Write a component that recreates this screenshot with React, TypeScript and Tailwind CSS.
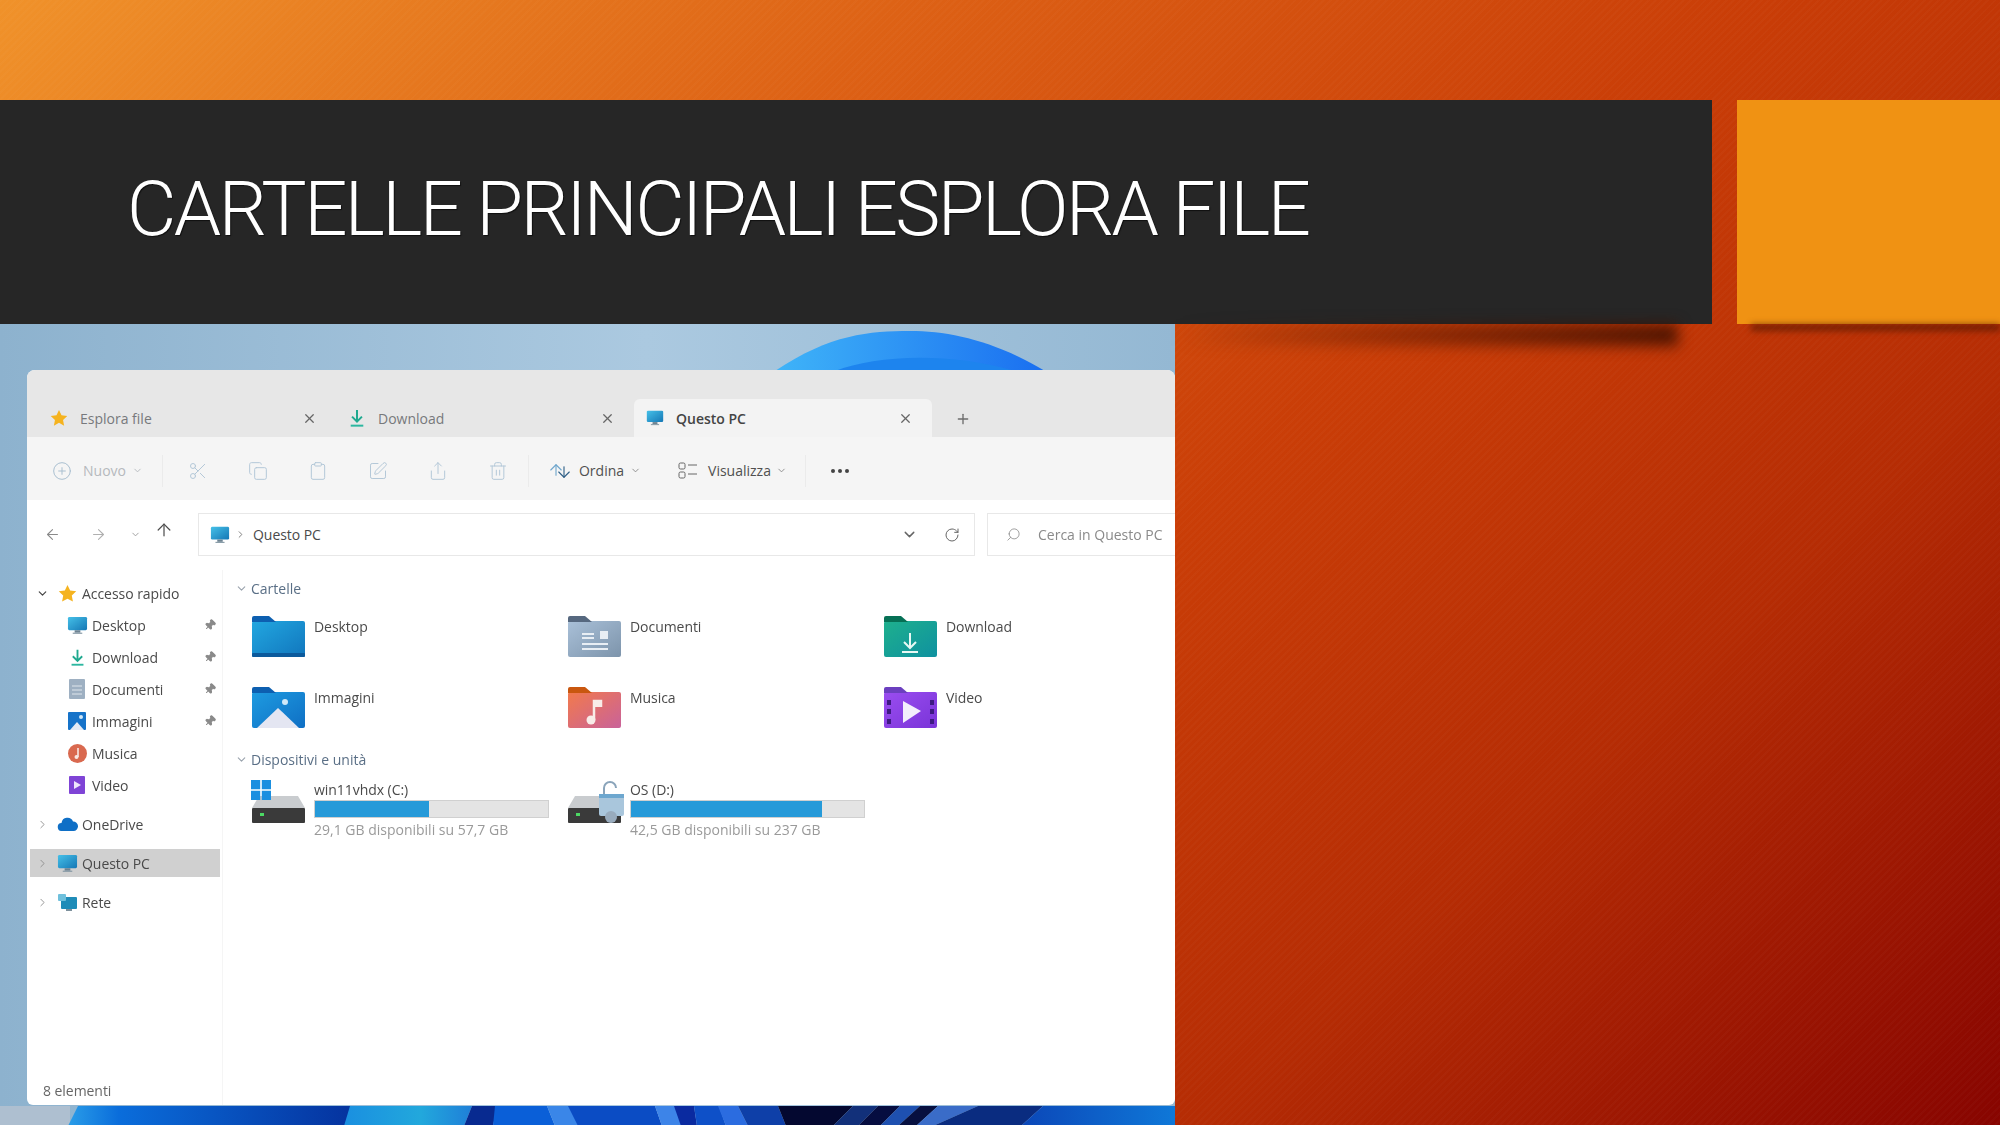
import React from "react";
import {
  ArrowDown,
  ArrowLeft,
  ArrowRight,
  ArrowUp,
  ChevronDown,
  ChevronRight,
  CirclePlus,
  Clipboard,
  Copy,
  Pin,
  Plus,
  RotateCw,
  Scissors,
  Search,
  Share,
  SquarePen,
  Trash2,
  X,
} from "lucide-react";

function StarIcon({ size = 18 }: { size?: number }) {
  return (
    <svg width={size} height={size} viewBox="0 0 20 20">
      <path d="M10 1l2.8 5.9 6.4.8-4.7 4.4 1.2 6.4L10 15.4l-5.700 3.100 1.200-6.400L.8 7.7l6.400-.8z" fill="#f5b31f" />
    </svg>
  );
}

function DownloadIcon({ size = 18 }: { size?: number }) {
  return (
    <svg width={size} height={size} viewBox="0 0 20 20" fill="none" stroke="#1fa98f" strokeWidth="2.2">
      <path d="M10 1v12M4.500 8.500L10 14l5.500-5.500" />
      <path d="M3 18.500h14" stroke="#2cb7a0" />
    </svg>
  );
}

function MonitorIcon({ size = 22 }: { size?: number }) {
  return (
    <svg width={size} height={size} viewBox="0 0 22 22">
      <defs>
        <linearGradient id="mon" x1="0" y1="0" x2="1" y2="1">
          <stop offset="0" stopColor="#45c0e8" />
          <stop offset="1" stopColor="#1577b5" />
        </linearGradient>
      </defs>
      <rect x="1" y="2" width="20" height="14" rx="1.500" fill="url(#mon)" />
      <rect x="8" y="16" width="6" height="2.500" fill="#6d8392" />
      <rect x="6" y="18.500" width="10" height="1.200" fill="#8296a3" />
    </svg>
  );
}

function Folder({ tab, from, to, children }: { tab: string; from: string; to: string; children?: React.ReactNode }) {
  const id = `f${from.slice(1)}`;
  return (
    <svg width="53" height="41" viewBox="0 0 53 41" className="shrink-0">
      <defs>
        <linearGradient id={id} x1="0" y1="0" x2="1" y2="1">
          <stop offset="0" stopColor={from} />
          <stop offset="1" stopColor={to} />
        </linearGradient>
      </defs>
      <rect x="0" y="5" width="53" height="36" rx="2" fill={`url(#${id})`} />
      <path d="M0 2a2 2 0 012-2h15l7 6H0z" fill={tab} />
      {children}
    </svg>
  );
}

const folders = [
  {
    name: "Desktop",
    icon: (
      <Folder tab="#0d5fb0" from="#22a7e0" to="#1176bd">
        <rect x="0" y="37" width="53" height="4" rx="1" fill="#0c5a9c" />
      </Folder>
    ),
  },
  {
    name: "Documenti",
    icon: (
      <Folder tab="#56687f" from="#a9c0d8" to="#7d94ab">
        <path d="M14 18h12M14 22h12M14 28h26M14 33h26" stroke="#e8eef4" strokeWidth="2" />
        <rect x="32" y="15" width="8" height="8" fill="#e8eef4" />
      </Folder>
    ),
  },
  {
    name: "Download",
    icon: (
      <Folder tab="#067055" from="#1eb08d" to="#0f91a0">
        <path d="M26 17v15M20 26l6 6 6-6M18 36h16" fill="none" stroke="#e8f8f4" strokeWidth="2" />
      </Folder>
    ),
  },
  {
    name: "Immagini",
    icon: (
      <Folder tab="#0d5fb0" from="#1e9be0" to="#0f6fc4">
        <path d="M5 41l21-20 21 20z" fill="#e4e6f2" />
        <circle cx="33" cy="15" r="3" fill="#cfe8f8" />
      </Folder>
    ),
  },
  {
    name: "Musica",
    icon: (
      <Folder tab="#c9570f" from="#f27a4c" to="#c9629a">
        <path d="M26 33V14h7v6" fill="none" stroke="#f8ece8" strokeWidth="2.500" />
        <path d="M27 14h7v6h-7z" fill="#f8ece8" />
        <circle cx="23" cy="33" r="4.500" fill="#f8ece8" />
      </Folder>
    ),
  },
  {
    name: "Video",
    icon: (
      <Folder tab="#6b3fbf" from="#9a4df0" to="#7a34d8">
        <path d="M19 14l18 10-18 12z" fill="#f3eefc" />
        <path d="M3 13h4v5H3zM3 22h4v5H3zM3 32h4v5H3zM46 13h4v5h-4zM46 22h4v5h-4zM46 32h4v5h-4z" fill="#3d1a82" />
      </Folder>
    ),
  },
];

function DriveBase() {
  return (
    <svg width="53" height="27" viewBox="0 0 53 27">
      <path d="M7 0h39l7 12H0z" fill="#c9cccf" />
      <rect x="0" y="12" width="53" height="15" rx="1" fill="#3a3a3a" />
      <rect x="8" y="17" width="4" height="3" fill="#4cd964" />
    </svg>
  );
}

function SideRow({
  label,
  icon,
  pinned,
  top,
  active,
}: {
  label: string;
  icon: React.ReactNode;
  pinned?: boolean;
  top?: "open" | "closed";
  active?: boolean;
}) {
  return (
    <div
      className={`relative flex h-[28px] w-[190px] items-center text-[14px] tracking-[-0.05px] text-[#4a4a4a] ${
        active ? "bg-[#d0d0d0]" : ""
      } ${top ? "pl-[6px]" : "pl-[36px]"}`}
    >
      {top === "open" && <ChevronDown size={13} strokeWidth={2.2} className="text-[#444444]" />}
      {top === "closed" && <ChevronRight size={13} strokeWidth={1.6} className="text-[#8a8a8a]" />}
      <span className={`flex w-[22px] shrink-0 items-center justify-center ${top ? "ml-[7px]" : ""}`}>{icon}</span>
      <span className="ml-[4px]">{label}</span>
      {pinned && <Pin size={12} fill="#8a8a8a" className="absolute right-[4px] rotate-45 text-[#8a8a8a]" />}
    </div>
  );
}

function SectionHead({ label }: { label: string }) {
  return (
    <div className="flex h-[22px] items-center text-[14px] tracking-[0px] text-[#5a6f86]">
      <ChevronDown size={13} className="ml-[-17px] mr-[3px] text-[#9aa3ad]" />
      {label}
    </div>
  );
}

function Tab({
  icon,
  label,
  active,
}: {
  icon: React.ReactNode;
  label: string;
  active?: boolean;
}) {
  return (
    <div
      className={`flex h-[38px] w-[298px] items-center pl-[12px] pr-[19px] text-[14px] tracking-[0px] ${
        active ? "rounded-t-md bg-[#f3f3f3] font-semibold text-[#444444]" : "text-[#77797c]"
      }`}
    >
      <span className="flex w-[18px] items-center justify-center">{icon}</span>
      <span className="ml-[12px]">{label}</span>
      <X size={15} className="ml-auto text-[#666666]" />
    </div>
  );
}

function ToolIcon({ children }: { children: React.ReactNode }) {
  return <span className="flex w-[20px] items-center justify-center text-[#b4c8d8]">{children}</span>;
}

function DriveRow({
  name,
  fill,
  info,
  icon,
}: {
  name: string;
  fill: number;
  info: string;
  icon: React.ReactNode;
}) {
  return (
    <div className="flex items-start">
      <div className="relative h-[43px] w-[53px] shrink-0 pt-[16px]">{icon}</div>
      <div className="ml-[9px] w-[235px]">
        <div className="flex h-[20px] items-center text-[14px] leading-none tracking-[-0.05px] text-[#4a4a4a]">{name}</div>
        <div className="h-[18px] border border-[#d0d0d0] bg-[#e4e4e4]">
          <div className="h-full bg-[#269ad9]" style={{ width: `${fill}%` }} />
        </div>
        <div className="mt-[2px] whitespace-nowrap text-[14px] leading-[20px] tracking-[0px] text-[#9a9a9a]">{info}</div>
      </div>
    </div>
  );
}

export default function App() {
  return (
    <div className="relative flex h-[1125px] w-[2000px] flex-col overflow-hidden bg-[linear-gradient(137deg,#f0922a_0%,#dc5f14_30%,#c93d07_55%,#b52c04_75%,#870400_100%)] font-['Open_Sans',sans-serif]">
      <div className="pointer-events-none absolute inset-0 bg-[repeating-linear-gradient(135deg,rgba(255,255,255,0.02)_0px,rgba(255,255,255,0.02)_2px,transparent_2px,transparent_5px)]" />

      <div className="h-[100px] shrink-0" />

      <header className="relative z-10 flex h-[224px] shrink-0">
        <div className="relative flex w-[1712px] items-center bg-[#262626] pb-[7px] pl-[127px]">
          <h1 className="whitespace-nowrap font-['Roboto',sans-serif] text-[76px] font-light leading-none tracking-[-2.6px] text-white [text-shadow:1px_1px_1px_rgba(0,0,0,0.6)]">
            CARTELLE PRINCIPALI ESPLORA FILE
          </h1>
          <div className="absolute left-[1175px] right-[34px] top-full h-[22px] bg-[linear-gradient(90deg,transparent,rgba(60,15,0,0.85))] blur-[7px]" />
        </div>
        <div className="relative ml-[25px] flex-1 bg-[#f09213]">
          <div className="absolute left-[14px] right-0 top-full h-[7px] bg-[rgba(70,20,0,0.6)] blur-[3px]" />
        </div>
      </header>

      <section className="relative flex w-[1175px] flex-1 flex-col overflow-hidden bg-[linear-gradient(90deg,#8db2ce_0%,#abc9e0_55%,#94b8d3_100%)] pb-[20px] pl-[27px] pt-[46px]">
        <svg className="absolute left-0 top-0" width="1175" height="802" viewBox="0 0 1175 802">
          <defs>
            <linearGradient id="arc" x1="0" y1="0" x2="1" y2="0">
              <stop offset="0" stopColor="#3fb4f8" />
              <stop offset="1" stopColor="#1a6ff0" />
            </linearGradient>
            <linearGradient id="wallA" x1="0" y1="0" x2="1" y2="0">
              <stop offset="0" stopColor="#2a9de8" />
              <stop offset="0.18" stopColor="#0a6ddb" />
              <stop offset="1" stopColor="#05339f" />
            </linearGradient>
            <linearGradient id="wallB" x1="0" y1="0" x2="1" y2="0">
              <stop offset="0" stopColor="#1a8fe0" />
              <stop offset="0.6" stopColor="#22a8dc" />
              <stop offset="1" stopColor="#1f7fd8" />
            </linearGradient>
            <linearGradient id="wallC" x1="0" y1="0" x2="1" y2="0">
              <stop offset="0" stopColor="#0b47b8" />
              <stop offset="1" stopColor="#0f78d8" />
            </linearGradient>
          </defs>
          <rect x="0" y="782" width="70" height="20" fill="#aebfd0" />
          <path d="M775 47C830 10 870 7 910 7s85 10 135 40z" fill="url(#arc)" />
          <path d="M835 47c40-15 110-20 180 0z" fill="#1d84ee" />
          <path d="M78 782h272v20H68z" fill="url(#wallA)" />
          <path d="M350 782h122l-8 20H344z" fill="url(#wallB)" />
          <path d="M472 782h25l-4 20h-29z" fill="#082a90" />
          <path d="M495 782h52l8 20h-62z" fill="#0a5fd8" />
          <path d="M547 782h22l10 20h-24z" fill="#3a86e8" />
          <path d="M568 782h87l7 20h-84z" fill="#0b4cc4" />
          <path d="M655 782h20l7 20h-20z" fill="#3d84e8" />
          <path d="M674 782h20l3 20h-16z" fill="#0a2aa0" />
          <path d="M694 782h25l7 20h-29z" fill="#0e50c8" />
          <path d="M718 782h20l10 20h-22z" fill="#2b6ce0" />
          <path d="M738 782h40l8 20h-38z" fill="#0e3fa8" />
          <path d="M778 782h75l-20 20h-47z" fill="#040830" />
          <path d="M853 782h25l-20 20h-25z" fill="#12307a" />
          <path d="M878 782h22l-20 20h-22z" fill="#060d40" />
          <path d="M900 782h20l-22 20h-18z" fill="#1e50b0" />
          <path d="M920 782h18l-22 20h-18z" fill="#071040" />
          <path d="M938 782h40l-45 20h-17z" fill="#3a6cc8" />
          <path d="M978 782h65l-22 20h-88z" fill="#0a2c80" />
          <path d="M1043 782h132v20h-154z" fill="url(#wallC)" />
        </svg>

        <div className="relative flex h-full flex-col overflow-hidden rounded-b-md rounded-t-lg bg-white blur-[0.7px]">
          <div className="flex h-[67px] shrink-0 items-end bg-[#e7e7e7] pl-[11px]">
            <Tab icon={<StarIcon />} label="Esplora file" />
            <Tab icon={<DownloadIcon />} label="Download" />
            <Tab icon={<MonitorIcon />} label="Questo PC" active />
            <span className="mb-[10px] ml-[23px] text-[#6c6c6c]">
              <Plus size={16} />
            </span>
          </div>

          <div className="flex h-[63px] shrink-0 items-center bg-[#f5f5f5] pl-[25px] pt-[4px] text-[14px] tracking-[0px]">
            <CirclePlus size={20} strokeWidth={1.2} className="text-[#a9bfd0]" />
            <span className="ml-[11px] text-[#b5b9bd]">Nuovo</span>
            <ChevronDown size={11} className="ml-[6px] text-[#b5b9bd]" />
            <span className="ml-[19px] h-[32px] w-px bg-[#ebebeb]" />
            <div className="ml-[25px] flex gap-[40px]">
              <ToolIcon><Scissors size={20} strokeWidth={1.2} /></ToolIcon>
              <ToolIcon><Copy size={20} strokeWidth={1.2} /></ToolIcon>
              <ToolIcon><Clipboard size={20} strokeWidth={1.2} /></ToolIcon>
              <ToolIcon><SquarePen size={20} strokeWidth={1.2} /></ToolIcon>
              <ToolIcon><Share size={20} strokeWidth={1.2} /></ToolIcon>
              <ToolIcon><Trash2 size={20} strokeWidth={1.2} /></ToolIcon>
            </div>
            <span className="ml-[20px] h-[32px] w-px bg-[#ebebeb]" />
            <span className="ml-[18px] flex text-[#6fa6cc]">
              <ArrowUp size={18} strokeWidth={1.5} className="-mr-[10px]" />
              <ArrowDown size={18} strokeWidth={1.5} className="mt-[2px] text-[#2f5f86]" />
            </span>
            <span className="ml-[6px] text-[#505050]">Ordina</span>
            <ChevronDown size={11} className="ml-[6px] text-[#8a8a8a]" />
            <svg width="22" height="18" viewBox="0 0 22 18" fill="none" stroke="#666666" className="ml-[37px]">
              <rect x="1" y="1" width="6" height="6" rx="1.500" />
              <rect x="1" y="10" width="6" height="6" rx="1.500" />
              <path d="M10 3h9M10 12h9" />
            </svg>
            <span className="ml-[8px] text-[#505050]">Visualizza</span>
            <ChevronDown size={11} className="ml-[5px] text-[#8a8a8a]" />
            <span className="ml-[18px] h-[32px] w-px bg-[#ebebeb]" />
            <span className="ml-[25px] flex gap-[3px]">
              <i className="h-[4px] w-[4px] rounded-full bg-[#444444]" />
              <i className="h-[4px] w-[4px] rounded-full bg-[#444444]" />
              <i className="h-[4px] w-[4px] rounded-full bg-[#444444]" />
            </span>
          </div>

          <div className="flex h-[70px] shrink-0 items-start bg-white pt-[13px]">
            <div className="flex h-[43px] w-[171px] shrink-0 items-center pl-[17px] text-[#9a9a9a]">
              <ArrowLeft size={17} strokeWidth={1.5} className="text-[#8a8a8a]" />
              <ArrowRight size={17} strokeWidth={1.5} className="ml-[29px] text-[#b0b0b0]" />
              <ChevronDown size={11} className="ml-[23px]" />
              <ArrowUp size={20} strokeWidth={1.5} className="ml-[13px] mt-[-10px] text-[#505050]" />
            </div>
            <div className="flex h-[43px] w-[777px] shrink-0 items-center border border-[#e8e8e8] pl-[11px] text-[14px] tracking-[-0.05px] text-[#4a4a4a]">
              <MonitorIcon size={20} />
              <ChevronRight size={11} className="ml-[5px] text-[#777777]" />
              <span className="ml-[7px]">Questo PC</span>
              <ChevronDown size={17} className="ml-auto text-[#666666]" />
              <RotateCw size={16} strokeWidth={1.5} className="ml-[26px] mr-[14px] text-[#666666]" />
            </div>
            <div className="ml-[12px] flex h-[43px] flex-1 items-center border border-[#e8e8e8] border-r-0 pl-[18px] text-[14px] tracking-[0px] text-[#8a8a8a]">
              <Search size={15} strokeWidth={1.3} className="-scale-x-100 text-[#8a8a8a]" />
              <span className="ml-[17px] whitespace-nowrap">Cerca in Questo PC</span>
            </div>
          </div>

          <div className="flex min-h-0 flex-1">
            <aside className="flex w-[196px] shrink-0 flex-col border-r border-[#f5f5f5] pl-[3px] pt-[9px]">
              <SideRow label="Accesso rapido" top="open" icon={<StarIcon size={19} />} />
              <div className="mt-[4px] flex flex-col gap-[4px]">
                <SideRow label="Desktop" pinned icon={<MonitorIcon size={21} />} />
                <SideRow label="Download" pinned icon={<DownloadIcon size={17} />} />
                <SideRow
                  label="Documenti"
                  pinned
                  icon={
                    <svg width="16" height="20" viewBox="0 0 16 20">
                      <rect width="16" height="20" rx="1" fill="#9eb0c2" />
                      <path d="M3 7h10M3 11h10M3 15h10" stroke="#dfe6ec" />
                    </svg>
                  }
                />
                <SideRow
                  label="Immagini"
                  pinned
                  icon={
                    <svg width="18" height="18" viewBox="0 0 18 18">
                      <rect width="18" height="18" rx="1" fill="#1673c9" />
                      <path d="M2 18l7-8 7 8z" fill="#e4ebf5" />
                      <circle cx="13" cy="5" r="2" fill="#cfe8f8" />
                    </svg>
                  }
                />
                <SideRow
                  label="Musica"
                  icon={
                    <svg width="19" height="19" viewBox="0 0 19 19">
                      <circle cx="9.500" cy="9.500" r="9.500" fill="#d9694f" />
                      <path d="M10 4v9" stroke="#f8e8e4" strokeWidth="1.600" />
                      <circle cx="8.500" cy="13" r="2" fill="#f8e8e4" />
                    </svg>
                  }
                />
                <SideRow
                  label="Video"
                  icon={
                    <svg width="16" height="18" viewBox="0 0 16 18">
                      <rect width="16" height="18" rx="1" fill="#7f44d6" />
                      <path d="M5 5l7 4-7 4z" fill="#eee6fb" />
                    </svg>
                  }
                />
              </div>
              <div className="mt-[11px] flex flex-col gap-[11px]">
                <SideRow
                  label="OneDrive"
                  top="closed"
                  icon={
                    <svg width="21" height="14" viewBox="0 0 21 14">
                      <path d="M5 14a4 4 0 01-.5-8A6 6 0 0116 4.500a4.500 4.500 0 01.500 9.500z" fill="#0f6fc6" />
                    </svg>
                  }
                />
                <SideRow label="Questo PC" top="closed" active icon={<MonitorIcon size={21} />} />
                <SideRow
                  label="Rete"
                  top="closed"
                  icon={
                    <svg width="21" height="19" viewBox="0 0 21 19">
                      <rect x="4" y="4" width="16" height="12" rx="1" fill="#1f8cb8" />
                      <rect x="1" y="1" width="8" height="7" rx="1" fill="#6fc0dc" />
                      <rect x="9" y="16" width="6" height="2" fill="#7d909c" />
                    </svg>
                  }
                />
              </div>
              <div className="mt-auto pb-[4px] pl-[13px] text-[14px] leading-[20px] tracking-[-0.05px] text-[#666666]">
                8 elementi
              </div>
            </aside>

            <main className="min-w-0 flex-1 pl-[29px] pt-[7px]">
              <SectionHead label="Cartelle" />
              <div className="mt-[17px] grid grid-cols-[316px_316px_316px] gap-y-[30px]">
                {folders.map((f) => (
                  <div key={f.name} className="flex items-start">
                    {f.icon}
                    <span className="ml-[9px] mt-[1px] text-[14px] leading-[20px] tracking-[-0.05px] text-[#4a4a4a]">
                      {f.name}
                    </span>
                  </div>
                ))}
              </div>
              <div className="mt-[20px]">
                <SectionHead label="Dispositivi e unità" />
              </div>
              <div className="mt-[10px] grid grid-cols-[316px_316px]">
                <DriveRow
                  name="win11vhdx (C:)"
                  fill={49}
                  info="29,1 GB disponibili su 57,7 GB"
                  icon={
                    <>
                      <DriveBase />
                      <svg width="20" height="20" viewBox="0 0 20 20" className="absolute left-[-1px] top-0">
                        <path d="M0 0h9.200v9.200H0zM10.800 0H20v9.200h-9.200zM0 10.800h9.200V20H0zM10.800 10.800H20V20h-9.200z" fill="#1b8fe0" />
                      </svg>
                    </>
                  }
                />
                <DriveRow
                  name="OS (D:)"
                  fill={82}
                  info="42,5 GB disponibili su 237 GB"
                  icon={
                    <>
                      <DriveBase />
                      <svg width="26" height="44" viewBox="0 0 26 44" className="absolute left-[30px] top-0">
                        <path d="M6 14V8a6 6 0 0112 0" fill="none" stroke="#8aa4ba" strokeWidth="2" />
                        <rect x="1" y="14" width="25" height="22" rx="2" fill="#a9c6dc" />
                        <rect x="1" y="14" width="25" height="4" fill="#6da7cf" />
                        <circle cx="13" cy="37" r="6" fill="#98abbd" />
                      </svg>
                    </>
                  }
                />
              </div>
            </main>
          </div>
        </div>
      </section>
    </div>
  );
}
